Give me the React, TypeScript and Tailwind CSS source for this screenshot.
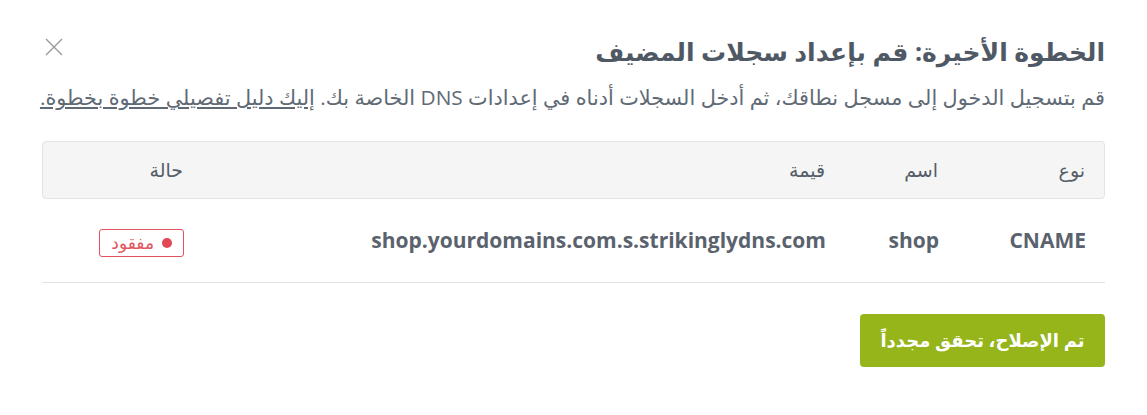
import React from "react";

interface DnsRecord {
  type: string;
  name: string;
  value: string;
  status: string;
}

const records: DnsRecord[] = [
  { type: "CNAME", name: "shop", value: "shop.yourdomains.com.s.strikinglydns.com", status: "مفقود" },
];

export default function App() {
  return (
    <div
      dir="rtl"
      className="relative h-[415px] w-[1147px] bg-white px-[42px] pt-[33px] text-[#5a6470]"
      style={{ fontFamily: '"Open Sans", "Noto Sans", "DejaVu Sans", sans-serif' }}
    >
      {/* close */}
      <button className="absolute left-[43px] top-[36px] h-[22px] w-[22px] text-[#9a9a9a]" aria-label="close">
        <svg viewBox="0 0 22 22" width="22" height="22" fill="none" stroke="currentColor" strokeWidth="1.4">
          <path d="M3 3 L19 19 M19 3 L3 19" />
        </svg>
      </button>

      <h2 className="text-[25px] font-bold leading-[36px] text-[#4f5965]">الخطوة الأخيرة: قم بإعداد سجلات المضيف</h2>
      <p className="mt-[14px] whitespace-nowrap text-[20.8px] leading-[28px] text-[#5f6a75]">
        قم بتسجيل الدخول إلى مسجل نطاقك، ثم أدخل السجلات أدناه في إعدادات DNS الخاصة بك.{" "}
        <a className="underline">إليك دليل تفصيلي خطوة بخطوة.</a>
      </p>

      <div className="mt-[30px]">
        <div className="grid h-[58px] grid-cols-[147px_113px_642px_162px] items-center rounded-[4px] border border-[#e3e3e3] bg-[#f5f5f5] text-[19px] text-[#545d68]">
          <div className="pr-[19px]">نوع</div>
          <div className="pr-[19px]">اسم</div>
          <div className="pr-[19px]">قيمة</div>
          <div className="pr-[19px]">حالة</div>
        </div>
        {records.map((r) => (
          <div
            key={r.value}
            className="grid h-[84px] grid-cols-[147px_113px_642px_162px] items-center border-b border-[#e3e3e3] text-[21px] font-bold text-[#5a626d]"
          >
            <div className="pr-[19px]">{r.type}</div>
            <div className="pr-[19px]">{r.name}</div>
            <div className="pr-[19px]">{r.value}</div>
            <div className="pr-[19px]">
              <span className="inline-flex h-[28px] items-center gap-[8px] rounded-[3px] border border-[#e2535d] bg-white px-[11px] text-[17px] font-normal text-[#e2535d]">
                <span className="h-[10px] w-[10px] rounded-full bg-[#e24854]" />
                {r.status}
              </span>
            </div>
          </div>
        ))}
      </div>

      <div className="mt-[31px] flex">
        <button className="h-[53px] w-[245px] rounded-[4px] bg-[#95b51b] text-[18px] font-bold text-white">
          تم الإصلاح، تحقق مجدداً
        </button>
      </div>
    </div>
  );
}
